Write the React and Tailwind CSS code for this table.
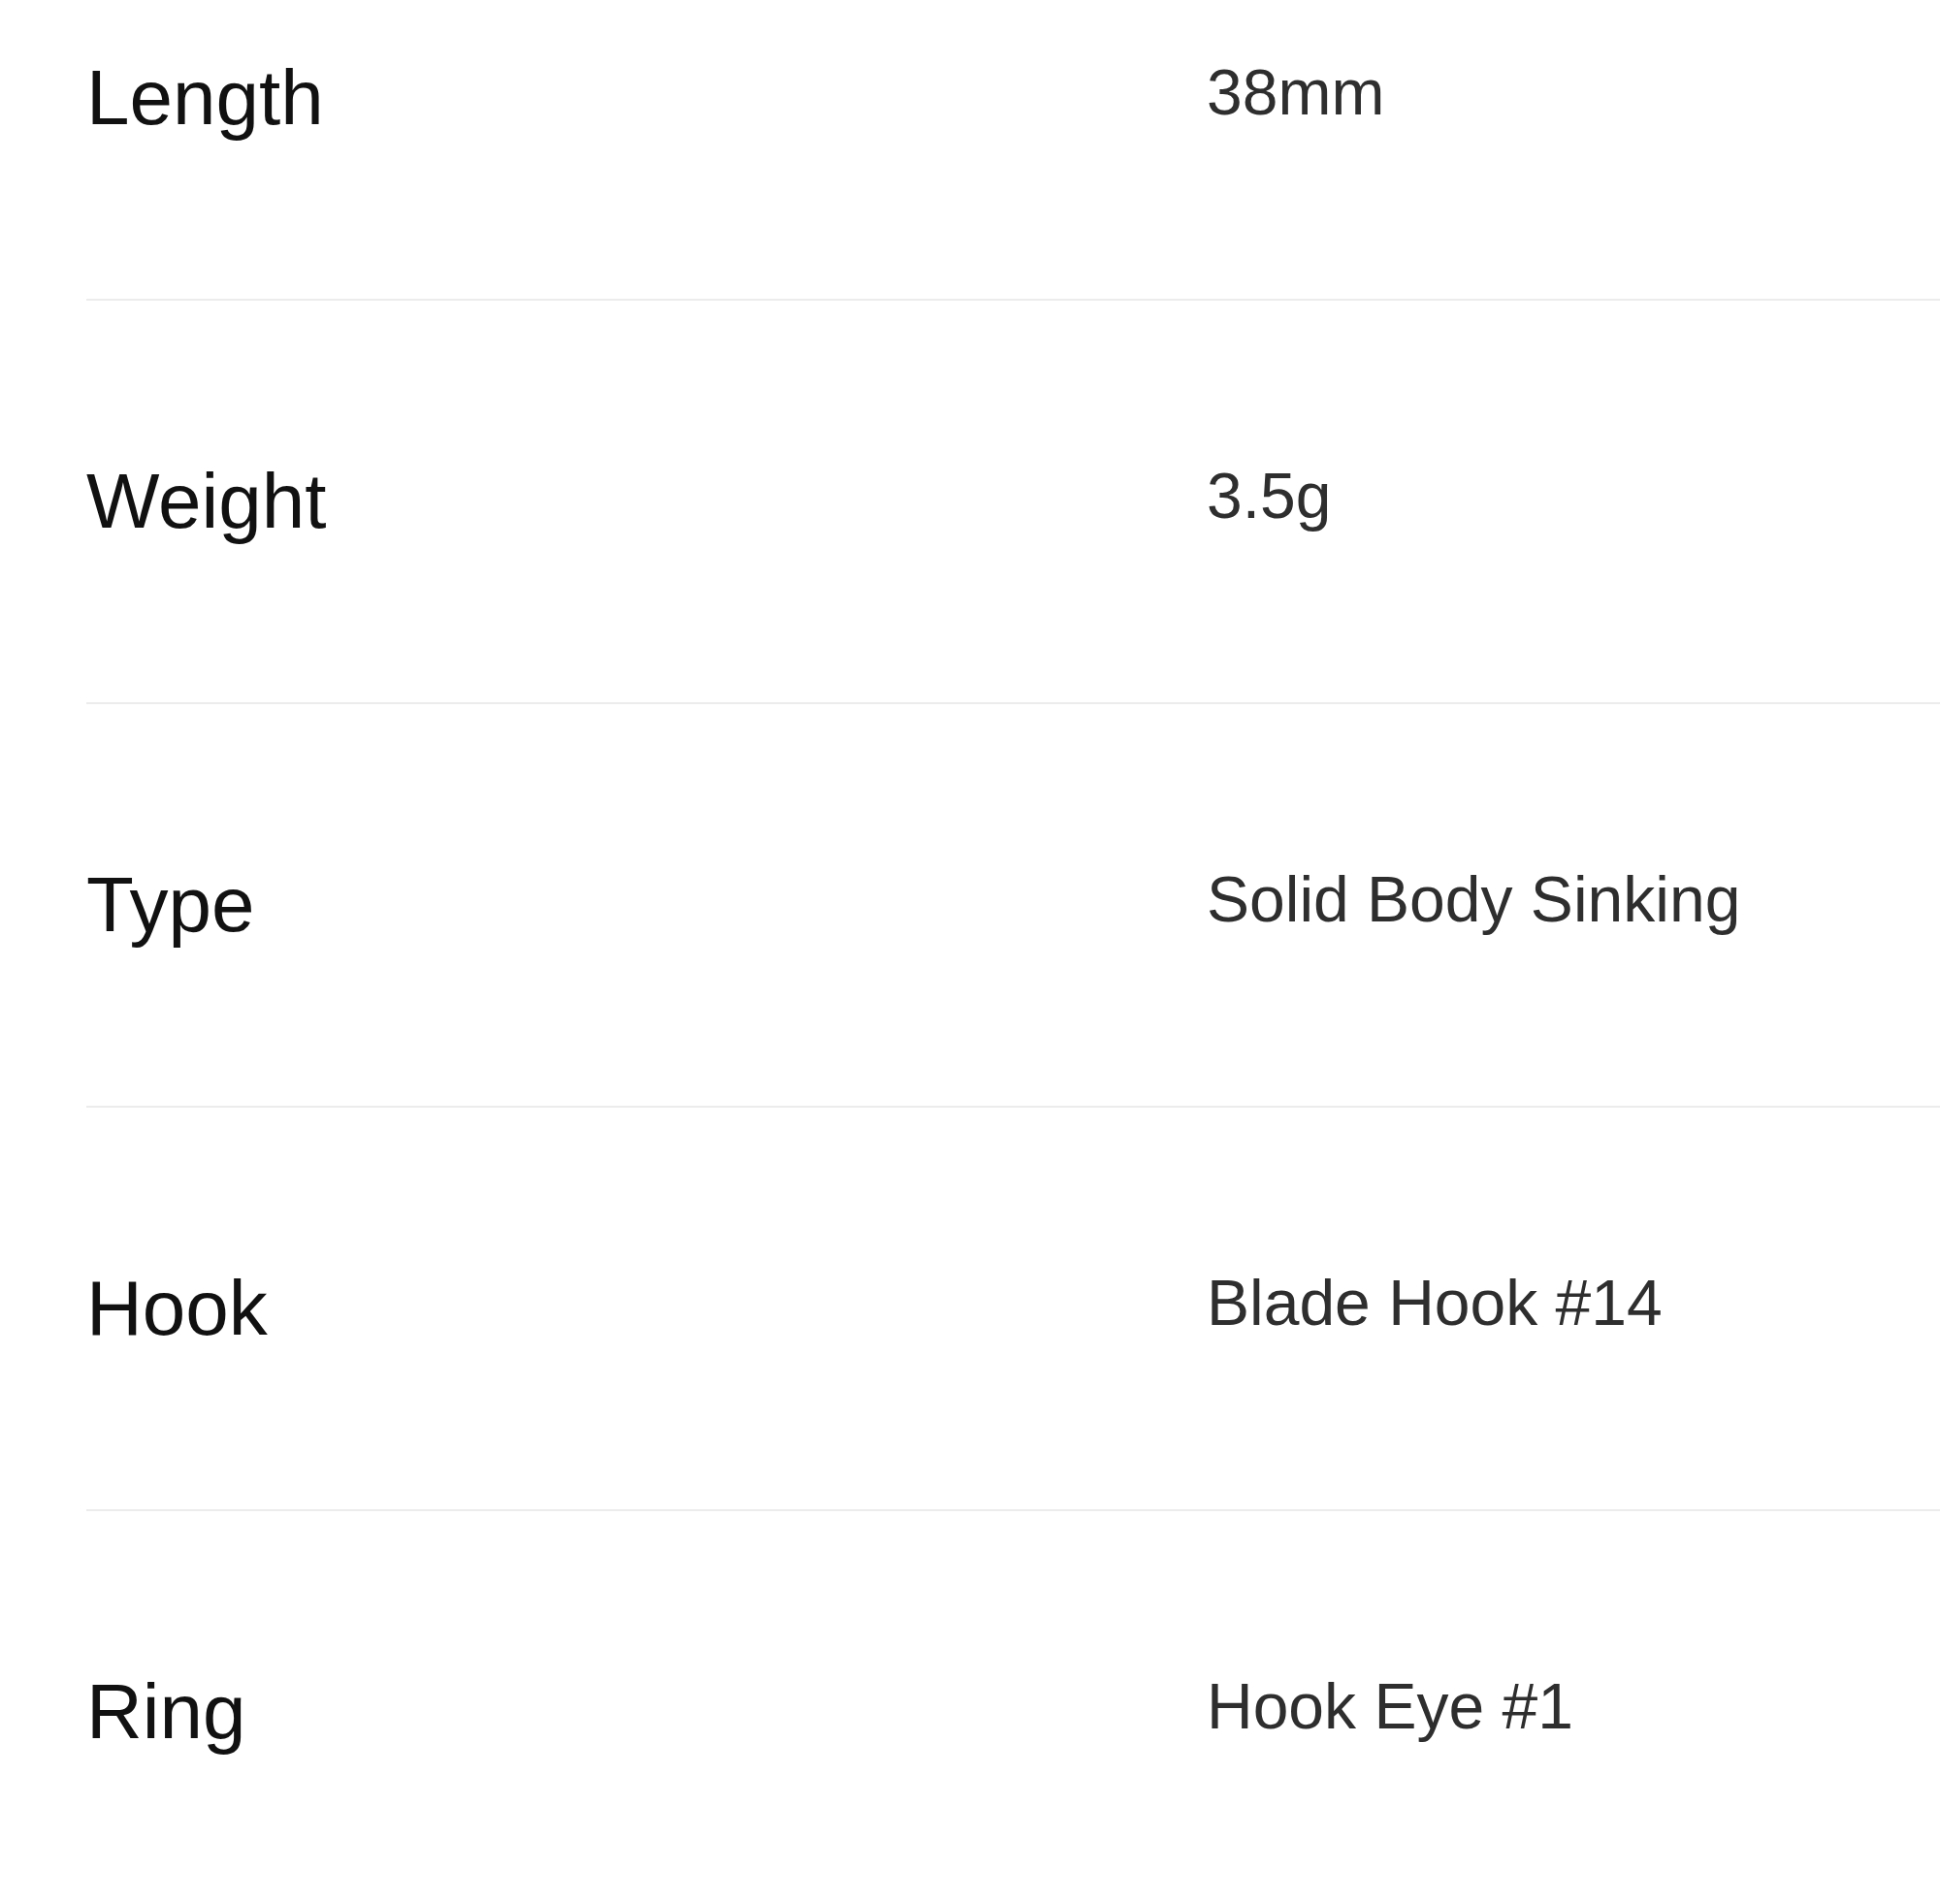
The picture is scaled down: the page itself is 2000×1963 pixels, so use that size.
const specs = [
  { label: "Length", value: "38mm" },
  { label: "Weight", value: "3.5g" },
  { label: "Type", value: "Solid Body Sinking" },
  { label: "Hook", value: "Blade Hook #14" },
  { label: "Ring", value: "Hook Eye #1" },
];

function SpecRow({ label, value }) {
  return (
    <div className="flex h-[416px] items-start border-t-2 border-[#ececec] pt-[167px]">
      <div className="w-[1155px] shrink-0 text-[80px] leading-[80px] text-[#111111]">
        {label}
      </div>
      <div className="pt-[1px] text-[66px] leading-[66px] text-[#2e2e2e]">
        {value}
      </div>
    </div>
  );
}

export default function App() {
  return (
    <div className="h-[1963px] overflow-hidden bg-white font-['Liberation_Sans',Arial,sans-serif]">
      <div className="-mt-[108px] pl-[89px]">
        {specs.map((s) => (
          <SpecRow key={s.label} label={s.label} value={s.value} />
        ))}
      </div>
    </div>
  );
}
